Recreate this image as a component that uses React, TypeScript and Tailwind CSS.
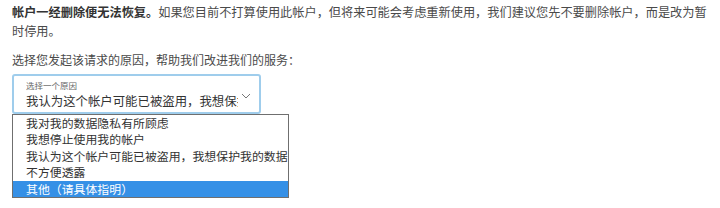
export default function App() {
  const options = [
    "我对我的数据隐私有所顾虑",
    "我想停止使用我的帐户",
    "我认为这个帐户可能已被盗用，我想保护我的数据",
    "不方便透露",
    "其他（请具体指明）",
  ];
  const selected = 4;

  return (
    <div
      className="w-[720px] h-[208px] bg-white px-[12px] pt-[3px] text-[#4a4a4a] overflow-hidden"
      style={{ fontFamily: '"Noto Sans CJK SC", "Noto Sans", sans-serif' }}
    >
      <p className="w-[700px] text-[12.2px] leading-[19px]">
        <span className="font-bold text-[#333]">帐户一经删除便无法恢复。</span>
        如果您目前不打算使用此帐户，但将来可能会考虑重新使用，我们建议您先不要删除帐户，而是改为暂时停用。
      </p>
      <p className="mt-[9px] text-[12px] leading-[19px]">选择您发起该请求的原因，帮助我们改进我们的服务：</p>

      <div className="mt-[5px] w-[249px] h-[40px] rounded-[3px] border-2 border-[#9fcdec] flex items-center pl-[12px] pr-[8px]">
        <div className="flex-1 min-w-0 overflow-hidden">
          <div className="text-[8.5px] leading-[10px] text-[#666]">选择一个原因</div>
          <div className="mt-[3px] text-[12.4px] leading-[16px] text-[#333] whitespace-nowrap overflow-hidden">
            我认为这个帐户可能已被盗用，我想保护我的数据
          </div>
        </div>
        <svg width="10" height="6" viewBox="0 0 10 6" className="ml-[3px] mt-[3px] shrink-0">
          <polyline points="1,1 5,5 9,1" fill="none" stroke="#777" strokeWidth="1" />
        </svg>
      </div>

      <div className="w-[277px] border border-[#6f6f6f] bg-white">
        {options.map((o, i) => (
          <div
            key={o}
            className={`h-[16.4px] pl-[13px] text-[11.9px] leading-[16.4px] whitespace-nowrap ${
              i === selected ? "bg-[#3590e6] text-white" : "text-[#333]"
            }`}
          >
            {o}
          </div>
        ))}
      </div>
    </div>
  );
}
